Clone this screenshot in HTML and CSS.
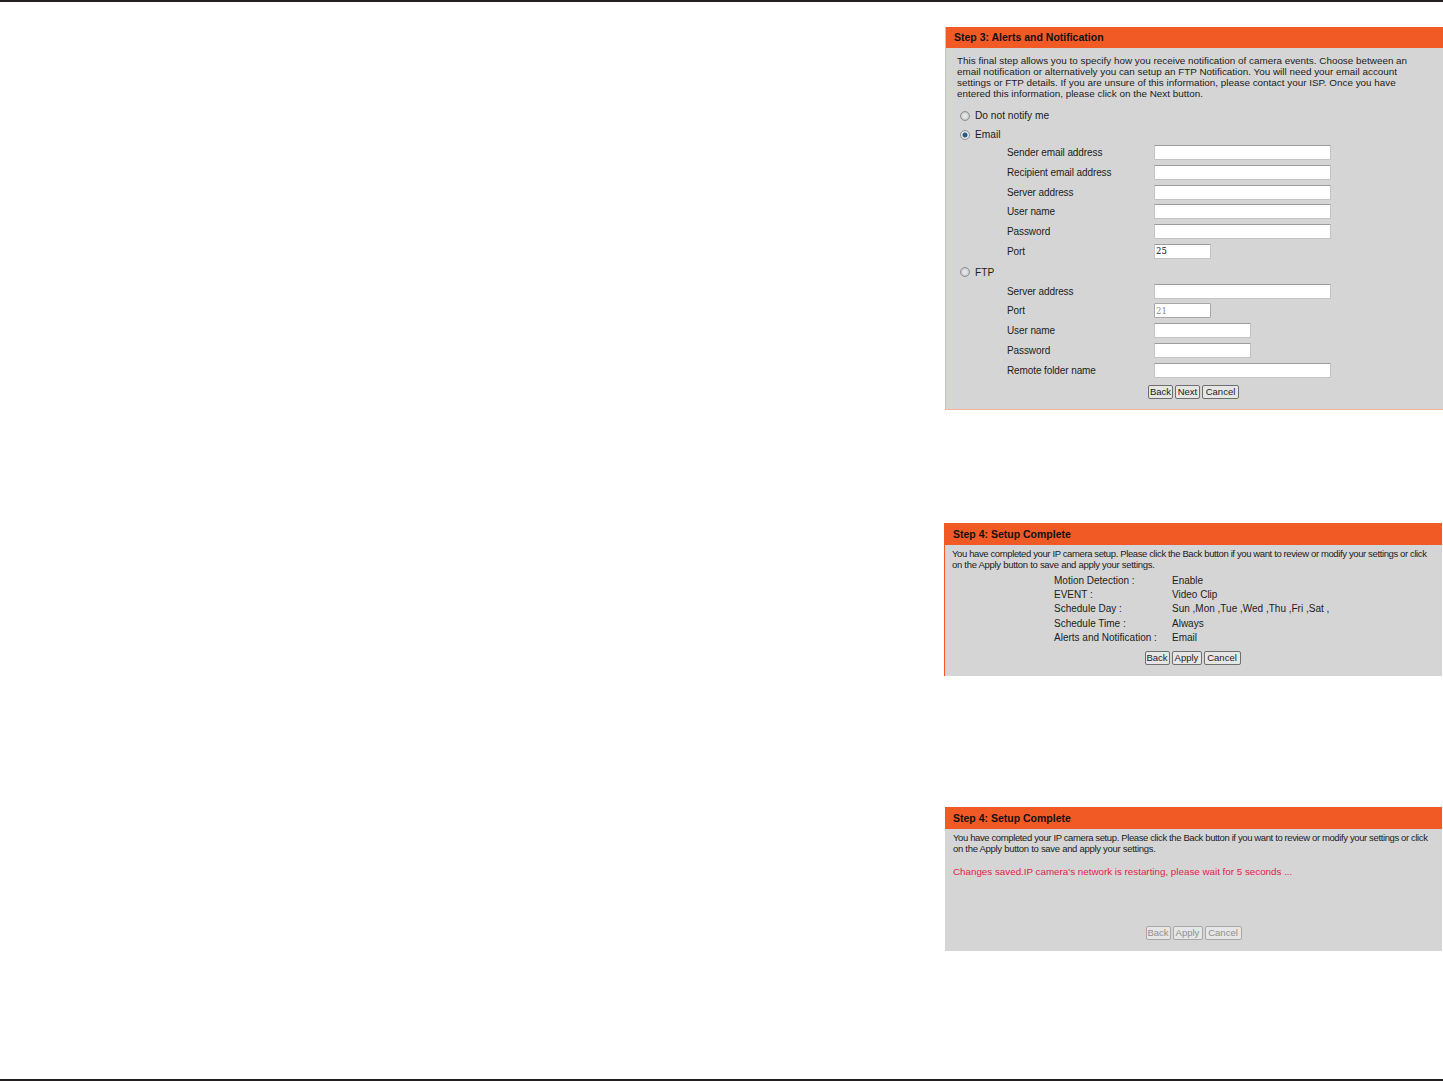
FILE: index.html
```html
<!DOCTYPE html>
<html>
<head>
<meta charset="utf-8">
<title>Setup wizard</title>
<link rel="stylesheet" href="styles.css">
</head>
<body>
<div class="page">

<div class="panel step3">
  <div class="head">Step 3: Alerts and Notification</div>
  <p class="intro">This final step allows you to specify how you receive notification of camera events. Choose between an<br>email notification or alternatively you can setup an FTP Notification. You will need your email account<br>settings or FTP details. If you are unsure of this information, please contact your ISP. Once you have<br>entered this information, please click on the Next button.</p>
  <div class="form">
    <label class="choice first"><input type="radio" name="n"><span>Do not notify me</span></label>
    <label class="choice mail"><input type="radio" name="n" checked><span>Email</span></label>
    <div class="row"><span>Sender email address</span><input class="long" type="text"></div>
    <div class="row"><span>Recipient email address</span><input class="long" type="text"></div>
    <div class="row"><span>Server address</span><input class="long" type="text"></div>
    <div class="row"><span>User name</span><input class="long" type="text"></div>
    <div class="row"><span>Password</span><input class="long" type="password"></div>
    <div class="row"><span>Port</span><input class="port" type="text" value="25"></div>
    <label class="choice"><input type="radio" name="n"><span>FTP</span></label>
    <div class="row"><span>Server address</span><input class="long" type="text"></div>
    <div class="row"><span>Port</span><input class="port" type="text" value="21" disabled></div>
    <div class="row"><span>User name</span><input class="mid" type="text"></div>
    <div class="row"><span>Password</span><input class="mid" type="password"></div>
    <div class="row"><span>Remote folder name</span><input class="long" type="text"></div>
  </div>
  <div class="buttons">
    <button>Back</button><button>Next</button><button class="cancel">Cancel</button>
  </div>
</div>

<div class="panel step4">
  <div class="head">Step 4: Setup Complete</div>
  <p class="done">You have completed your IP camera setup. Please click the Back button if you want to review or modify your settings or click<br>on the Apply button to save and apply your settings.</p>
  <div class="summary">
    <span>Motion Detection :</span><span>Enable</span>
    <span>EVENT :</span><span>Video Clip</span>
    <span>Schedule Day :</span><span>Sun ,Mon ,Tue ,Wed ,Thu ,Fri ,Sat ,</span>
    <span>Schedule Time :</span><span>Always</span>
    <span>Alerts and Notification :</span><span>Email</span>
  </div>
  <div class="buttons">
    <button>Back</button><button class="apply">Apply</button><button class="cancel">Cancel</button>
  </div>
</div>

<div class="panel step4b">
  <div class="head">Step 4: Setup Complete</div>
  <p class="done">You have completed your IP camera setup. Please click the Back button if you want to review or modify your settings or click<br>on the Apply button to save and apply your settings.</p>
  <p class="saved">Changes saved.IP camera's network is restarting, please wait for 5 seconds ...</p>
  <div class="buttons">
    <button disabled>Back</button><button class="apply" disabled>Apply</button><button class="cancel" disabled>Cancel</button>
  </div>
</div>

</div>
</body>
</html>
```

FILE: styles.css
```css
* { box-sizing: border-box; }
body { margin: 0; background: #fff; color: #1c1c1c; font-family: "Liberation Sans", sans-serif; font-size: 10px; }

.page {
  height: 1081px;
  border-top: 2px solid #231f20;
  border-bottom: 2px solid #231f20;
  padding-top: 25px;
  overflow: hidden;
}

.panel { background: #d5d5d5; width: 498px; margin-left: 945px; }
.head {
  background: #f15a25;
  color: #111;
  font-size: 10.5px;
  font-weight: bold;
  height: 21px;
  line-height: 21px;
  padding-left: 8px;
}

.step3 { height: 383px; border: 1px solid #f0b598; border-top: 0; border-right: 0; }
.step4 { height: 153px; margin-top: 113px; margin-left: 944px; border-left: 1px solid #f15a25; }
.step4b { height: 144px; margin-top: 131px; width: 497px; }
.step4 .head, .step4b .head { height: 22px; line-height: 23px; }

.intro { margin: 7px 0 0 11px; font-size: 9.9px; line-height: 11px; white-space: nowrap; }
.form { margin-top: 4px; }

.choice, .row { display: flex; align-items: center; height: 19.8px; }
.choice { padding-left: 14px; padding-top: 2px; font-size: 10.2px; }
.choice.first { padding-top: 6px; }
.choice.mail { padding-top: 4px; }
.choice span { margin-left: 5px; }
.choice input {
  appearance: none;
  width: 10px;
  height: 10px;
  margin: 0;
  border: 1px solid #8f8f8f;
  border-radius: 50%;
  background: radial-gradient(circle, #e4e4e4 0 2px, #c4c4c4 4px);
}
.choice input:checked { background: radial-gradient(circle, #2a5a8c 0 2px, #e8e8e8 3px); }

.row { padding-left: 61px; letter-spacing: -0.1px; }
.row span { width: 147px; }
.row input {
  height: 15px;
  padding: 0 1px;
  border: 1px solid #c4c4c4;
  border-top-color: #9c9c9c;
  border-radius: 1px;
  background: #fff;
  font-family: "DejaVu Serif", serif;
  font-size: 8.5px;
  color: #111;
}
.row input:disabled { color: #8a8a8a; border-color: #a8a8a8; }
.long { width: 177px; }
.mid { width: 97px; }
.port { width: 57px; }

.buttons { display: flex; justify-content: center; gap: 2px; }
.buttons button {
  width: 25px;
  height: 14px;
  padding: 0;
  border: 1px solid #6f6f6f;
  border-radius: 2px;
  background: #e6e6e6;
  font-family: inherit;
  font-size: 9.5px;
  line-height: 12px;
  color: #1c1c1c;
}
.buttons .apply { width: 30px; }
.buttons .cancel { width: 37px; }
.buttons button:disabled { border-color: #a8a8a8; color: #8f8f8f; }

.step3 .buttons { margin-top: 5px; padding-right: 2px; }

.done { margin: 4px 0 0 8px; font-size: 9.5px; letter-spacing: -0.29px; line-height: 10.5px; white-space: nowrap; }
.done::first-line { letter-spacing: -0.38px; }
.step4 .done { margin-left: 7px; }

.summary {
  display: grid;
  grid-template-columns: 118px auto;
  grid-auto-rows: 14.4px;
  align-items: center;
  margin: 3px 0 0 109px;
}
.step4 .buttons { margin-top: 6px; padding-right: 2px; }

.saved { margin: 12px 0 0 8px; font-size: 9.8px; color: #e8174e; }
.step4b .buttons { margin-top: 49px; }
```
